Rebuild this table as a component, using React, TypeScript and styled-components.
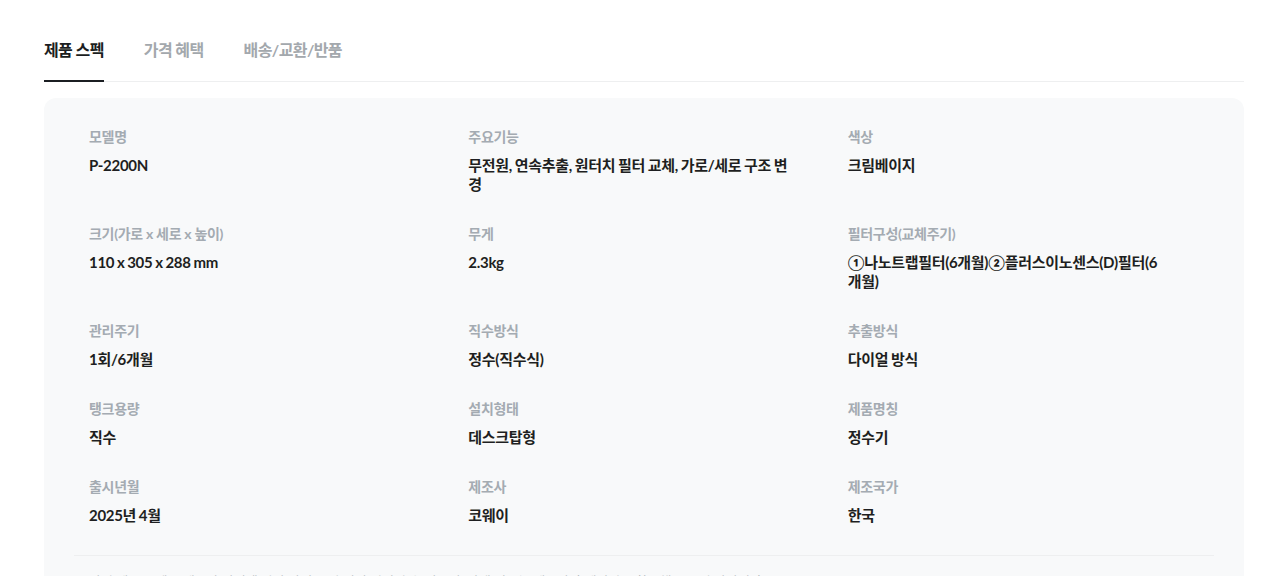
import React from "react";
import styled, { createGlobalStyle } from "styled-components";

const GlobalStyle = createGlobalStyle`
  html, body {
    margin: 0;
    padding: 0;
    background: #ffffff;
  }
  body {
    font-family: "Lato", "Noto Sans CJK KR", sans-serif;
    color: #1e1f21;
  }
`;

const Page = styled.div`
  margin: 0 36px 0 44px;
  padding-top: 24px;
`;

const TabBar = styled.div`
  display: flex;
  gap: 40px;
  border-bottom: 1px solid #eeeff0;
`;

const Tab = styled.div<{ $active?: boolean }>`
  padding: 14px 0 18px;
  margin-bottom: -1px;
  line-height: 24px;
  font-size: 16px;
  font-weight: 700;
  letter-spacing: -0.6px;
  color: ${(p) => (p.$active ? "#1b1e22" : "#a3a8ad")};
  border-bottom: 2px solid ${(p) => (p.$active ? "#1b1e22" : "transparent")};
`;

const Panel = styled.section`
  margin-top: 16px;
  background: #f8f9fa;
  border-radius: 12px;
  padding: 29px 30px 0;
`;

const SpecGrid = styled.dl`
  margin: 0;
  padding: 0 15px 30px;
  display: grid;
  grid-template-columns: repeat(3, 1fr);
  column-gap: 28px;
  row-gap: 30px;
  border-bottom: 1px solid #eeeff0;
`;

const SpecItem = styled.div`
  padding-right: 29px;
`;

const Label = styled.dt`
  font-size: 14px;
  line-height: 20px;
  font-weight: 700;
  color: #a4abb2;
  letter-spacing: -0.3px;
`;

const Value = styled.dd`
  margin: 9px 0 0;
  font-size: 15px;
  line-height: 19px;
  font-weight: 700;
  color: #1e1f21;
  letter-spacing: -0.3px;
  word-spacing: -0.6px;
`;

const Note = styled.p`
  margin: 0;
  padding: 15px 15px 20px;
  font-size: 13px;
  line-height: 20px;
  color: #b4b9be;
`;

const specs: [string, string][] = [
  ["모델명", "P-2200N"],
  ["주요기능", "무전원, 연속추출, 원터치 필터 교체, 가로/세로 구조 변경"],
  ["색상", "크림베이지"],
  ["크기(가로 x 세로 x 높이)", "110 x 305 x 288 mm"],
  ["무게", "2.3kg"],
  ["필터구성(교체주기)", "①나노트랩필터(6개월)②플러스이노센스(D)필터(6개월)"],
  ["관리주기", "1회/6개월"],
  ["직수방식", "정수(직수식)"],
  ["추출방식", "다이얼 방식"],
  ["탱크용량", "직수"],
  ["설치형태", "데스크탑형"],
  ["제품명칭", "정수기"],
  ["출시년월", "2025년 4월"],
  ["제조사", "코웨이"],
  ["제조국가", "한국"],
];

export default function App() {
  return (
    <>
      <GlobalStyle />
      <Page>
        <TabBar>
          <Tab $active>제품 스펙</Tab>
          <Tab>가격 혜택</Tab>
          <Tab>배송/교환/반품</Tab>
        </TabBar>
        <Panel>
          <SpecGrid>
            {specs.map(([label, value]) => (
              <SpecItem key={label}>
                <Label>{label}</Label>
                <Value>{value}</Value>
              </SpecItem>
            ))}
          </SpecGrid>
          <Note>
            상기 제품 스펙은 제조사 사정에 따라 사전 고지 없이 변경될 수 있으며, 상세 정보는 제조사 홈페이지를 참고해 주시기 바랍니다.
          </Note>
        </Panel>
      </Page>
    </>
  );
}
